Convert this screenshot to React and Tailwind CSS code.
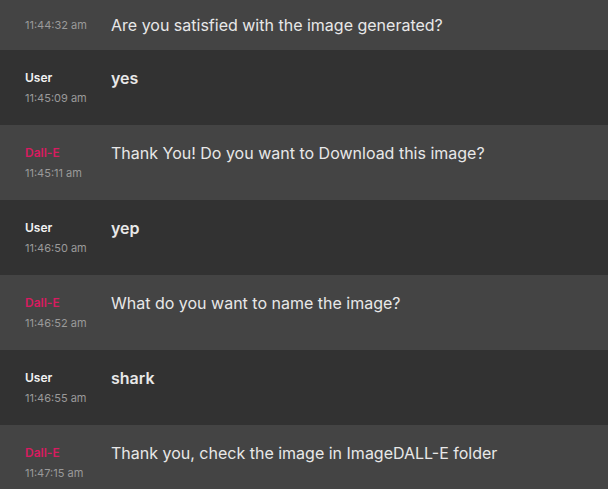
const messages = [
  { from: 'Dall-E', time: '11:45:11 am', text: 'Thank You! Do you want to Download this image?' },
  { from: 'User', time: '11:46:50 am', text: 'yep' },
  { from: 'Dall-E', time: '11:46:52 am', text: 'What do you want to name the image?' },
  { from: 'User', time: '11:46:55 am', text: 'shark' },
  { from: 'Dall-E', time: '11:47:15 am', text: 'Thank you, check the image in ImageDALL-E folder' },
];

function Row({ from, time, text }) {
  const isBot = from !== 'User';
  return (
    <div className={`flex h-[75px] pl-[25px] pt-[16px] ${isBot ? 'bg-[#444444]' : 'bg-[#323232]'}`}>
      <div className="w-[86px] shrink-0 pt-[2px]">
        <div className={`text-[12px] leading-[20px] font-semibold ${isBot ? 'text-[#d81b60]' : 'text-[#f2f2f2]'}`}>
          {from}
        </div>
        <div className="mt-[1px] text-[11px] leading-[18px] text-[#9a9a9a]">{time}</div>
      </div>
      <div className={`text-[16px] leading-[24px] text-[#e8e8e8] ${isBot ? '' : 'font-semibold'}`}>
        {text}
      </div>
    </div>
  );
}

export default function App() {
  return (
    <div className="h-[489px] w-[608px] overflow-hidden bg-[#323232] font-['Inter','Noto_Sans',sans-serif]">
      {/* previous message, scrolled partly out of view */}
      <div className="flex h-[50px] items-center bg-[#444444] pl-[25px]">
        <div className="w-[86px] shrink-0 text-[11px] text-[#9a9a9a]">11:44:32 am</div>
        <div className="text-[16px] leading-[24px] text-[#e8e8e8]">Are you satisfied with the image generated?</div>
      </div>
      <Row from="User" time="11:45:09 am" text="yes" />
      {messages.map((m, i) => (
        <Row key={i} {...m} />
      ))}
    </div>
  );
}
